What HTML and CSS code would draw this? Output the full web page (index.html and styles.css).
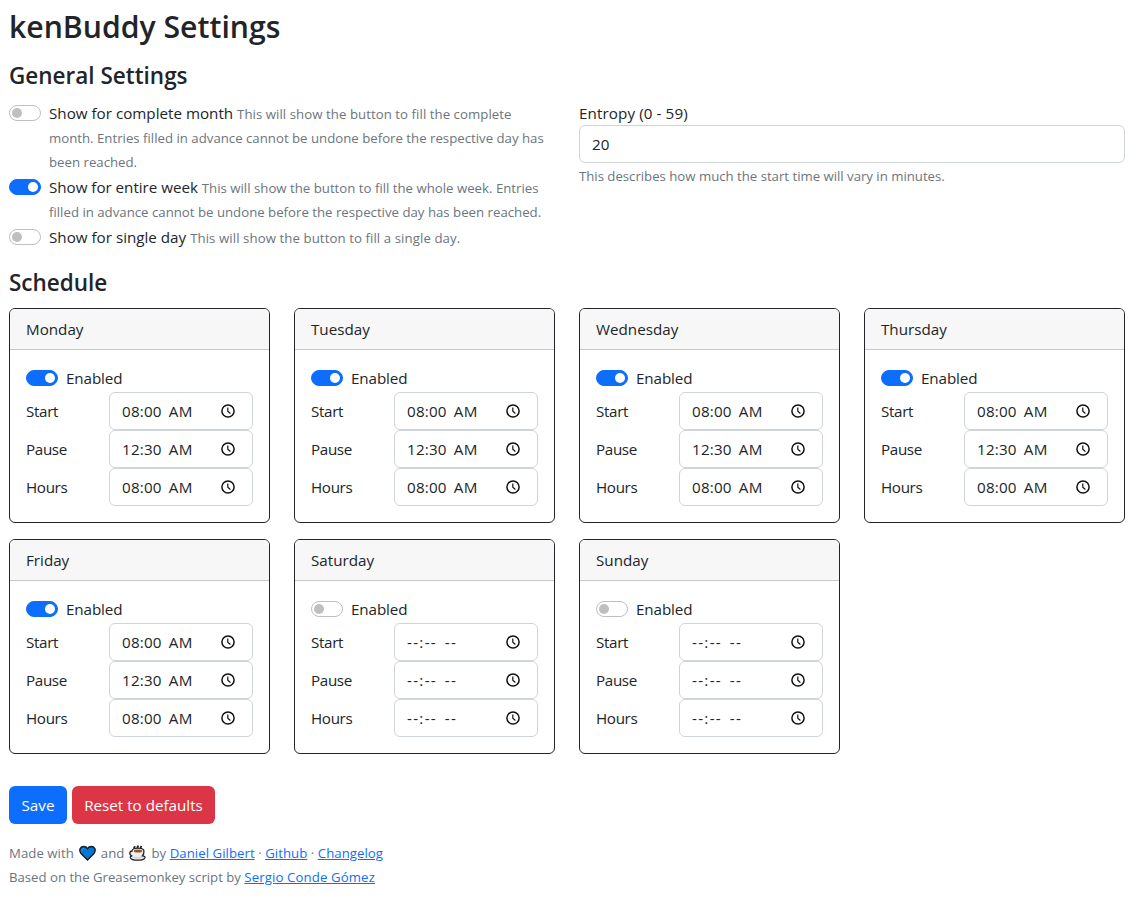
FILE: index.html
```html
<!DOCTYPE html>
<html lang="en">
<head>
<meta charset="utf-8">
<title>kenBuddy Settings</title>
<link rel="stylesheet" href="styles.css">
</head>
<body>
<main class="page">
  <h1>kenBuddy Settings</h1>
  <h2>General Settings</h2>
  <div class="general">
    <div class="options">
      <div class="option"><span class="switch"></span><div class="option-text">Show for complete month <small class="first-hint">This will show the button to fill the complete<br></small><small>month. Entries filled in advance cannot be undone before the respective day has<br>been reached.</small></div></div>
      <div class="option"><span class="switch on"></span><div class="option-text"><span class="week">Show for entire week</span> <small>This will show the button to fill the whole week. Entries<br>filled in advance cannot be undone before the respective day has been reached.</small></div></div>
      <div class="option"><span class="switch"></span><div class="option-text">Show for single day <small class="day-hint">This will show the button to fill a single day.</small></div></div>
    </div>
    <div class="entropy">
      <div class="entropy-label">Entropy (0 - 59)</div>
      <div class="control">20</div>
      <small>This describes how much the start time will vary in minutes.</small>
    </div>
  </div>
  <h2 class="schedule-title">Schedule</h2>
  <div class="schedule" id="schedule"></div>
  <div class="actions"><button class="btn save">Save</button><button class="btn reset">Reset to defaults</button></div>
  <footer class="footer">
    <div>Made with <svg class="emoji" viewBox="0 0 17 16"><path d="M8.5 15 1.8 8.2C-.5 4.8 1.6 1.5 4.7 1.5c1.8 0 3 .9 3.8 2.1.8-1.2 2-2.1 3.8-2.1 3.1 0 5.2 3.3 2.9 6.7Z" fill="#0078d7" stroke="#111c28" stroke-width="1.4"/><path d="M3 6.5C2.6 4.7 3.5 3.3 5 3.2" fill="none" stroke="#3a9bea"/></svg> and <svg class="emoji" viewBox="0 0 17 16"><path d="M5.2 3.6V2.4l1-1.2M8.5 3V1.8l1-1.2M11.8 3.2V2l.8-1" fill="none" stroke="#222" stroke-width="1.7"/><path d="M3 6C3 3.9 5.6 3.1 9 3.1s5.9.8 5.9 2.9c.2 2.2-.3 3.7-1.4 4.8 1.8.3 2.8.9 2.5 1.9-.7 1.7-3.7 2.5-7.3 2.5S2 14.400 1.300 12.700c-.3-1 .5-1.600 2-1.900C.2 10.500 0 6.400 3 6Z" fill="#ededed" stroke="#222" stroke-width="1.3"/><ellipse cx="9" cy="5.9" rx="4.2" ry="1.5" fill="#8e562e"/><path d="M4.500 12.400q4.500 1.300 9 0" fill="none" stroke="#c2c2c2" stroke-width=".8"/></svg> by <a href="#">Daniel Gilbert</a> · <a href="#">Github</a> · <a href="#">Changelog</a></div>
    <div class="credit">Based on the Greasemonkey script by <a href="#">Sergio Conde Gómez</a></div>
  </footer>
</main>
<script src="schedule.js"></script>
</body>
</html>
```
FILE: styles.css
```css
* { box-sizing: border-box; }
body { margin: 0; background: #fff; color: #212529; font: 15.2px/24px "Open Sans", "Noto Sans", sans-serif; white-space: nowrap; }
.page { width: 1125px; padding: 8px 0 0 9px; }
h1, h2 { margin: 0; font-weight: 600; }
h1 { font-size: 30.2px; line-height: 38px; }
h2 { margin-top: 15px; font-size: 22.5px; line-height: 29px; }
small { color: #6c757d; font-size: 13.23px; line-height: 20px; }
.first-hint { letter-spacing: .05px; }
.week { letter-spacing: -.03px; }
.day-hint { letter-spacing: .08px; }
.general { display: grid; grid-template-columns: 546px 546px; gap: 24px; margin-top: 11px; height: 149px; }
.option { display: flex; gap: 8px; margin-bottom: 2px; }
.switch { flex: none; width: 32px; height: 16px; margin-top: 4px; padding: 2px; border: 1px solid #bfbfbf; border-radius: 8px; display: flex; }
.switch::before { content: ""; width: 10px; height: 10px; border-radius: 50%; background: #bfbfbf; }
.switch.on { justify-content: flex-end; background: #0d6efd; border-color: #0d6efd; }
.switch.on::before { background: #fff; }
.control { display: flex; align-items: center; height: 38px; padding: 0 12px; border: 1px solid #ced4da; border-radius: 6px; }
.entropy-label { height: 24px; letter-spacing: .1px; }
.entropy small { display: block; margin-top: 3px; letter-spacing: -.02px; }
.schedule-title { margin-top: 18px; }
.schedule { display: grid; grid-template-columns: repeat(4, 261px); gap: 16px 24px; margin-top: 11px; }
.card { height: 215px; border: 1px solid #212529; border-radius: 6px; overflow: hidden; }
.card-header { height: 41px; padding: 8px 16px; background: #f7f7f7; border-bottom: 1px solid #c8c9ca; }
.card-body { padding: 16px; }
.enabled { letter-spacing: -.1px; }
.label { letter-spacing: -.35px; }
.field { display: flex; justify-content: space-between; align-items: center; height: 38px; }
.time { width: 144px; justify-content: space-between; padding-right: 17px; }
.value { letter-spacing: .2px; word-spacing: 3px; }
.value.blank { letter-spacing: 1.3px; word-spacing: 2.5px; }
.clock { width: 14px; height: 14px; }
.actions { display: flex; gap: 5px; margin-top: 32px; }
.btn { height: 38px; padding: 0; border: 0; border-radius: 6px; color: #fff; font: inherit; }
.save { width: 58px; background: #0d6efd; }
.reset { width: 143px; background: #dc3545; }
.footer { margin-top: 17px; font-size: 13.2px; letter-spacing: .05px; color: #6c757d; }
.footer a { color: #0d6efd; }
.credit { letter-spacing: -.01px; }
.credit a { letter-spacing: .12px; }
.emoji { width: 17px; height: 16px; margin: 0 1.5px; vertical-align: -3px; }
```
FILE: schedule.js
```js
const days = ["Monday", "Tuesday", "Wednesday", "Thursday", "Friday", "Saturday", "Sunday"];
const clock = '<svg class="clock" viewBox="0 0 14 14" fill="none" stroke="#111"><circle cx="7" cy="7" r="6.1" stroke-width="1.5"/><path d="M6.8 3.5v3.8l2.6 2.2" stroke-width="1.2"/></svg>';
document.getElementById("schedule").innerHTML = days.map((day, i) => {
  const enabled = i < 5;
  const times = enabled ? ["08:00 AM", "12:30 AM", "08:00 AM"] : Array(3).fill("--:-- --");
  const fields = ["Start", "Pause", "Hours"].map((label, n) =>
    `<div class="field"><span class="label">${label}</span><div class="control time"><span class="${enabled ? "value" : "value blank"}">${times[n]}</span>${clock}</div></div>`).join("");
  return `<section class="card"><div class="card-header">${day}</div><div class="card-body"><div class="option"><span class="switch${enabled ? " on" : ""}"></span><span class="enabled">Enabled</span></div>${fields}</div></section>`;
}).join("");
```
